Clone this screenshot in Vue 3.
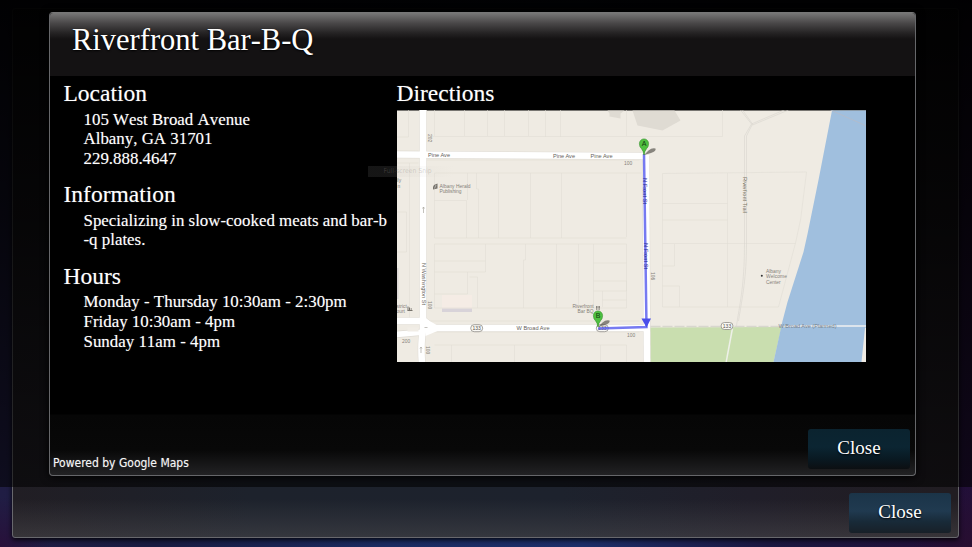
<script setup>
const sections = [
  { title: 'Location', lines: ['105 West Broad Avenue', 'Albany, GA 31701', '229.888.4647'] },
  { title: 'Information', lines: ['Specializing in slow-cooked meats and bar-b', '-q plates.'] },
  { title: 'Hours', lines: ['Monday - Thursday 10:30am - 2:30pm', 'Friday 10:30am - 4pm', 'Sunday 11am - 4pm'] }
]
const markers = [
  { label: 'A', x: 643.5, y: 155 },
  { label: 'B', x: 597.5, y: 327 }
]
</script>

<template>
  <main class="screen">
    <section class="window">
      <footer class="window-foot"><button class="btn btn-outer">Close</button></footer>
    </section>
    <div class="shade"></div>

    <section class="dialog">
      <header class="head"><h1>Riverfront Bar-B-Q</h1></header>
      <div class="content">
        <div class="details">
          <section v-for="s in sections" :key="s.title" class="block">
            <h2>{{ s.title }}</h2>
            <p v-for="line in s.lines" :key="line">{{ line }}</p>
          </section>
        </div>
        <div class="directions">
          <h2>Directions</h2>
          <svg class="map" viewBox="396.5 110 469.5 252" width="469.5" height="252">
            <rect x="396" y="110.500" width="471" height="253" fill="#efebe3" />
            <!-- buildings, park and river -->
            <path d="M607 110.500h17l-4 3v5l-11-2v-3zM632 110.500h42l6 10-18 10-25-5z" fill="#dfdbd3" />
            <rect x="441.500" y="295" width="30" height="13.500" fill="#f5ece5" />
            <path d="M441.500 308.500h30v3.500h-30z" fill="#d8d3d9" />
            <path d="M396 268h2v31h-2z" fill="#dcd7d6" />
            <path d="M649 327.500L781 327L773 362H649z" fill="#c9deaf" />
            <path d="M831.500 110.500H867V362H773L782 321L787 302L803 252L807 234L818 180z" fill="#a0bfde" />
            <path d="M864.500 328L867 327V362h-6z" fill="#efebe3" />
            <path d="M830 110l36 16" stroke="#b5bbc8" fill="none" stroke-width=".8" />
            <!-- parcel lines -->
            <g fill="none" stroke="#e1ddd5" stroke-width=".6">
              <path d="M396 137h12V110M396 151h22M396 163h22M409 163v159M396 212h10v40h-10M434 110v26M464 110v26M487 110v26M504 110v26M528 110v26M545 110v27M560 110v27M626 110v26M429 136.500h293V110" />
              <path d="M434 238V173h207M467 173v27M434 200.500h32V238M476 173v16l2 0v49M498 173v65M530 173v65M561 173v65M626 173v64M434 238h192M434 244h192v64H434zM434 261h51M485 244v28h-51M467 272v22h-33M469 277h8v31M556 244v64M578 244v64M593 244v64M593 263h33M593 281h33v10h-33M602 291v16M602 300h24M523 308v-48h2v-16M426 160h213M426 321h213M426 332h213M434 345h192v17M451 345v17M514 345v17M600 345v17" />
              <path d="M662 173.500L806 172 800 220 795 243 778 307H662zM662 203.500h65M662 220h65M727 173v134M662 243.500h133M674 244v22h-12M662 286h17v21" />
            </g>
            <path d="M740 110l11 14-7 12v107c0 35-3 53-7 76l-1 7M742 110l10 14-6 12v107c0 35-4 53-8 78M786 109l-35 15M788 110l-36 15" fill="none" stroke="#d9d5ce" stroke-width=".6" />
            <path d="M732 328L725.500 363" stroke="#eef0e8" stroke-width="1.500" />
            <!-- roads with a thin casing -->
            <g fill="none" stroke-linejoin="round">
              <g stroke="#dfdbd4">
                <path d="M422.500 109V330Q420 343 421.500 364" stroke-width="7.500" />
                <path d="M395 154.500L641 156" stroke-width="7.500" />
                <path d="M395 321H424L432 328H646" stroke-width="7.500" />
                <path d="M395 334.500L424 332" stroke-width="7" />
                <path d="M645.500 156L646.500 363" stroke-width="7.500" />
              </g>
              <g stroke="#fff">
                <path d="M422.500 109V330Q420 343 421.500 364" stroke-width="6.500" />
                <path d="M395 154.500L643 156" stroke-width="6.500" />
                <path d="M395 321H424L432 328H646" stroke-width="6.500" />
                <path d="M395 334.500L424 332" stroke-width="5.500" />
                <path d="M645.500 155L646.500 363" stroke-width="6.500" />
              </g>
            </g>
            <path d="M424 318l13 7.500v5.500l-12 5z" fill="#fff" />
            <path d="M407 327.500h11v4h-11z" fill="#f1ede6" />
            <path d="M650 326.500H785" stroke="#d8d6ce" stroke-width="1.600" stroke-dasharray="10 2" />
            <path d="M785 326H867" stroke="#dce4ec" stroke-width="1.800" />
            <!-- street and place labels -->
            <g class="street">
              <text x="427.500" y="157" textLength="22">Pine Ave</text>
              <text x="552.500" y="158.300" textLength="22">Pine Ave</text>
              <text x="590" y="158.300" textLength="22">Pine Ave</text>
              <text x="516" y="330" textLength="33">W Broad Ave</text>
              <text transform="translate(421 263) rotate(90)" textLength="42">N Washington St</text>
              <text transform="translate(742.500 177) rotate(90)" textLength="36" fill="#777264">Riverfront Trail</text>
              <text x="778" y="327.500" textLength="58" fill="#77818b">W Broad Ave (Planned)</text>
            </g>
            <g class="place">
              <text x="439" y="187.500" textLength="31">Albany Herald</text>
              <text x="439" y="193" textLength="22">Publishing</text>
              <text x="765.500" y="272.500">Albany</text>
              <text x="765.500" y="278" textLength="21">Welcome</text>
              <text x="765.500" y="283.500">Center</text>
              <text x="572" y="307.500" textLength="21">Riverfront</text>
              <text x="577" y="313" textLength="16">Bar BQ</text>
              <text x="396" y="182">ily</text>
              <text x="397" y="187.500">n</text>
              <text x="396" y="308">strict</text>
              <text x="396" y="313">ourt</text>
              <text x="401.500" y="343">200</text>
              <text x="623.500" y="165">100</text>
              <text x="626.500" y="337">100</text>
              <text transform="translate(427.500 134) rotate(90)">202</text>
              <text transform="translate(427.500 301) rotate(90)">100</text>
              <text transform="translate(425.500 346) rotate(90)">100</text>
              <text transform="translate(650 272) rotate(90)">106</text>
            </g>
            <g fill="none" stroke="#aaa7a0" stroke-width=".7">
              <path d="M423 213v-6m-1 1.500l1-1.500 1 1.500M420.500 353v-6m-1 1.500l1-1.500 1 1.500M427 327.500h-3" />
            </g>
            <circle cx="761.300" cy="275.800" r="1" fill="#333" />
            <path d="M432.500 187l1-2 3.500-1.500v5l-4.500 1z" fill="#77736c" />
            <path d="M434 188.500l1.500-3.500" stroke="#ddd" stroke-width=".6" />
            <path d="M407.500 306.500v4M409 307.500v3M407 310.500h5M410 309h1.500" stroke="#77736c" stroke-width="1" />
            <path d="M596.300 306v4M598.600 306v4M595.500 307h1.500M598 307h1.500" stroke="#66625c" stroke-width=".8" />
            <g class="shield">
              <rect x="470.200" y="324.700" width="12" height="7" rx="3.500" />
              <text x="476.200" y="330.200">133</text>
              <rect x="720.500" y="322.500" width="12" height="7" rx="3.500" />
              <text x="726.500" y="328">133</text>
              <rect x="595.800" y="324.700" width="12" height="7" rx="3.500" />
              <text x="601.800" y="330.200">133</text>
            </g>
            <!-- route from A to B -->
            <path d="M643.500 154L646 327L597.500 328.500" fill="none" stroke="#4b50ed" stroke-opacity=".76" stroke-width="2.500" />
            <path d="M641 318.500H650.500L646 327.500z" fill="#4a4eea" />
            <g class="route-label">
              <text transform="translate(642.800 178) rotate(90)" textLength="26">N Front St</text>
              <text transform="translate(643.200 243) rotate(90)" textLength="26">N Front St</text>
            </g>
            <!-- markers -->
            <g v-for="m in markers" :key="m.label" :transform="`translate(${m.x} ${m.y})`">
              <path d="M0 0L4.500-4.500Q8-7.500 11.500-6.500Q12.500-4 7-2z" fill="#55534d" opacity=".68" />
              <path d="M0 0Q-.5-4-2.500-6.300Q-4.600-8.200-4.600-11.300A4.600 4.800 0 0 1 4.600-11.300Q4.600-8.200 2.500-6.300Q.5-4 0 0z" fill="#4fc041" stroke="#37902d" stroke-width=".6" />
              <text class="pin" y="-8.700">{{ m.label }}</text>
            </g>
          </svg>
          <span class="ghost">Full-screen Snip</span>
        </div>
      </div>
      <footer class="foot">
        <span class="credit">Powered by Google Maps</span>
        <button class="btn btn-inner">Close</button>
      </footer>
    </section>
  </main>
</template>

<style>
body { margin: 0; overflow: hidden; background: #020204; }
</style>

<style scoped>
* { box-sizing: border-box; }
.screen {
  position: relative;
  width: 972px;
  height: 547px;
  padding: 8px 13px 9px 12px;
  overflow: hidden;
  background:
    radial-gradient(circle at 0 547px, #28103a, transparent 50px),
    radial-gradient(circle at 972px 547px, #280e30, transparent 60px),
    linear-gradient(90deg, #201d44 0, #191c42 16%, #1b2c62 40%, #1d2f69 60%, #1b1841 79%, #220f38 100%);
  font-family: "Liberation Serif", serif;
  font-kerning: none;
  color: #fff;
}
.window {
  display: flex;
  flex-direction: column;
  justify-content: flex-end;
  width: 947px;
  height: 530px;
  border: 1px solid #68686d;
  border-radius: 3px;
  background:
    linear-gradient(transparent 490px, rgba(88, 86, 89, .4) 528px),
    linear-gradient(90deg, #211e24, #1d222c 25%, #1d222d 58%, #201e29 78%, #211d22);
  box-shadow: 0 2px 5px rgba(0, 0, 0, .85);
}
.window-foot { display: flex; justify-content: flex-end; padding: 0 7px 4px; }
.shade {
  position: absolute;
  inset: 0 0 60px;
  background: linear-gradient(rgba(0, 0, 0, .97), rgba(0, 0, 0, .82) 45%, rgba(0, 0, 0, .56));
}
.dialog {
  position: absolute;
  left: 49px;
  top: 12px;
  width: 867px;
  height: 464px;
  display: flex;
  flex-direction: column;
  border: 1px solid #66676a;
  border-top-color: #777;
  border-radius: 4px;
  background: linear-gradient(#000 401px, #060606 402px, #080808 437px, #222224 462px);
  box-shadow: 0 1px 8px #000;
}
.head {
  height: 63px;
  padding: 9px 22px 0;
  border-radius: 3px 3px 0 0;
  background: linear-gradient(#777 0, #4a4849 10px, #252324 20px, #141213 26px, #141213);
}
h1, h2, p { margin: 0; font-weight: 400; white-space: nowrap; }
h1 { font-size: 30.500px; line-height: 36px; text-shadow: 0 1px 2px #000; }
h2 { font-size: 23.500px; line-height: 27px; text-shadow: 0 0 1px rgba(255, 255, 255, .4); }
.content { display: flex; flex: 1; min-height: 0; padding: 4px 14px 0; }
.details { width: 333px; margin-left: -.5px; }
.block { margin-bottom: 12.700px; }
.block h2 { margin-bottom: 2.700px; }
.block p {
  padding-left: 20px;
  font-size: 16.900px;
  line-height: 19.600px;
  text-shadow: 0 0 1px rgba(255, 255, 255, .4);
}
.directions { position: relative; }
.map { display: block; margin-top: 3px; }
.map text { font-family: "Liberation Sans", sans-serif; font-kerning: auto; }
.street { fill: #65625b; font-size: 5.600px; }
.place { fill: #858179; font-size: 4.900px; }
.route-label { fill: #23268f; font-size: 5.600px; }
.shield rect { fill: #faf9f5; stroke: #817e78; stroke-width: .7; }
.shield text { fill: #55524d; font-size: 5px; text-anchor: middle; }
.pin { fill: #123a10; font-size: 7px; text-anchor: middle; }
.ghost {
  position: absolute;
  left: -29px;
  top: 86px;
  width: 86px;
  height: 11px;
  padding-left: 16px;
  background: linear-gradient(90deg, rgba(90, 90, 90, .24) 29px, rgba(195, 190, 183, .12) 29px, transparent);
  color: rgba(135, 130, 125, .3);
  font: 6.800px/11px "DejaVu Sans Condensed", sans-serif;
  white-space: nowrap;
}
.foot { display: flex; justify-content: space-between; align-items: flex-end; padding: 0 5px 6px 3px; }
.credit {
  margin-bottom: -1px;
  font: 12px/14px "DejaVu Sans Condensed", sans-serif;
  color: #f6f6f6;
  text-shadow: 0 0 1px rgba(255, 255, 255, .4);
}
.btn {
  width: 102px;
  height: 40px;
  padding: 0 0 3px;
  border: 0;
  border-radius: 3px;
  color: #fff;
  font: 19px/36px "Liberation Serif", serif;
  text-shadow: 0 1px 2px #000;
}
.btn-outer { background: linear-gradient(#1b3448, #203a50 45%, #182a38 72%, #182028); }
.btn-inner { background: linear-gradient(#0b232f, #0b2532 45%, #091922 75%, #0c0f12); }
</style>
